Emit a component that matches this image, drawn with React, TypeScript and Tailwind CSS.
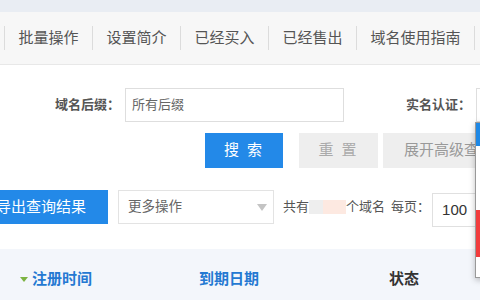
import React from "react";

const navItems = ["批量操作", "设置简介", "已经买入", "已经售出", "域名使用指南"];

const App = () => {
  return (
    <div className="relative w-[480px] h-[300px] overflow-hidden bg-white font-['Liberation_Sans','Noto_Sans_CJK_SC',sans-serif]">
      <div className="w-[700px]">
        {/* top strip */}
        <div className="h-[12px] bg-[#e9edf3]" />

        {/* nav */}
        <nav className="h-[53px] bg-[#f7f7f7] border-b border-[#e8e8e8] flex items-center pl-[4px]">
          {navItems.map((item) => (
            <div
              key={item}
              className="h-[24px] flex items-center border-l border-[#dcdcdc] px-[13.5px] text-[15px] text-[#555] whitespace-nowrap last:border-r"
            >
              {item}
            </div>
          ))}
        </nav>

        {/* row 1 */}
        <div className="flex items-center mt-[23px]">
          <label className="w-[120px] text-right text-[13px] font-bold text-[#555]">域名后缀：</label>
          <div className="ml-[5px] w-[219px] h-[34px] border border-[#dedede] flex items-center px-[6px] text-[13px] text-[#666]">
            所有后缀
          </div>
          <label className="w-[127px] text-right text-[13px] font-bold text-[#555]">实名认证：</label>
          <div className="ml-[5px] w-[150px] h-[34px] border border-[#dedede]" />
        </div>

        {/* row 2 */}
        <div className="flex items-center mt-[11px] ml-[205px]">
          <button className="w-[78px] h-[35px] bg-[#2389e8] text-white text-[15px] tracking-[2px]">搜 索</button>
          <button className="ml-[16px] w-[79px] h-[35px] bg-[#eeeeee] text-[#aaa] text-[15px] tracking-[2px]">重 置</button>
          <button className="ml-[5px] h-[35px] px-[21px] bg-[#eeeeee] text-[#999] text-[15px] whitespace-nowrap">
            展开高级查询
          </button>
        </div>

        {/* row 3 */}
        <div className="flex items-start mt-[22px]">
          <button className="ml-[-26px] w-[134px] h-[34px] bg-[#2389e8] text-white text-[15px] whitespace-nowrap">
            导出查询结果
          </button>
          <div className="ml-[10px] w-[156px] h-[34px] border border-[#e3e3e3] flex items-center justify-between pl-[9px] pr-[6px] text-[13.5px] text-[#666]">
            <span>更多操作</span>
            <svg width="10" height="7" viewBox="0 0 10 7">
              <path d="M0 0H10L5 7Z" fill="#c4c4c4" />
            </svg>
          </div>
          <div className="ml-[9px] h-[34px] flex items-center text-[13px] text-[#555] whitespace-nowrap">
            <span>共有</span>
            <span className="flex h-[14px]">
              <span className="w-[14px] bg-[#eeeeee]" />
              <span className="w-[23px] bg-[#fde9e1]" />
            </span>
            <span>个域名</span>
            <span className="ml-[6px]">每页：</span>
          </div>
          <div className="ml-[2px] mt-[3px] w-[60px] h-[34px] border border-[#e0e0e0] flex items-center pl-[9px] text-[15px] text-[#333]">
            100
          </div>
        </div>

        {/* table header */}
        <div className="mt-[22px] h-[60px] bg-[#f3f6fb] flex items-center text-[15px] font-bold">
          <span className="ml-[20px] w-[12px] flex items-center">
            <svg width="8" height="5" viewBox="0 0 8 5">
              <path d="M0 0H8L4 5Z" fill="#7cb342" />
            </svg>
          </span>
          <span className="text-[#2479d2]">注册时间</span>
          <span className="ml-[107px] text-[#2479d2]">到期日期</span>
          <span className="ml-[130px] text-[#333]">状态</span>
        </div>
      </div>

      {/* open dropdown of 实名认证 */}
      <div className="absolute left-[475px] top-[122px] w-[140px] h-[156px] bg-white border border-[#999] shadow-[0_2px_6px_rgba(0,0,0,0.25)]">
        <div className="h-[23px] bg-[#1e88e5]" />
        <div className="h-[64px]" />
        <div className="h-[47px] bg-[#f23c3c]" />
      </div>
    </div>
  );
};

export default App;
